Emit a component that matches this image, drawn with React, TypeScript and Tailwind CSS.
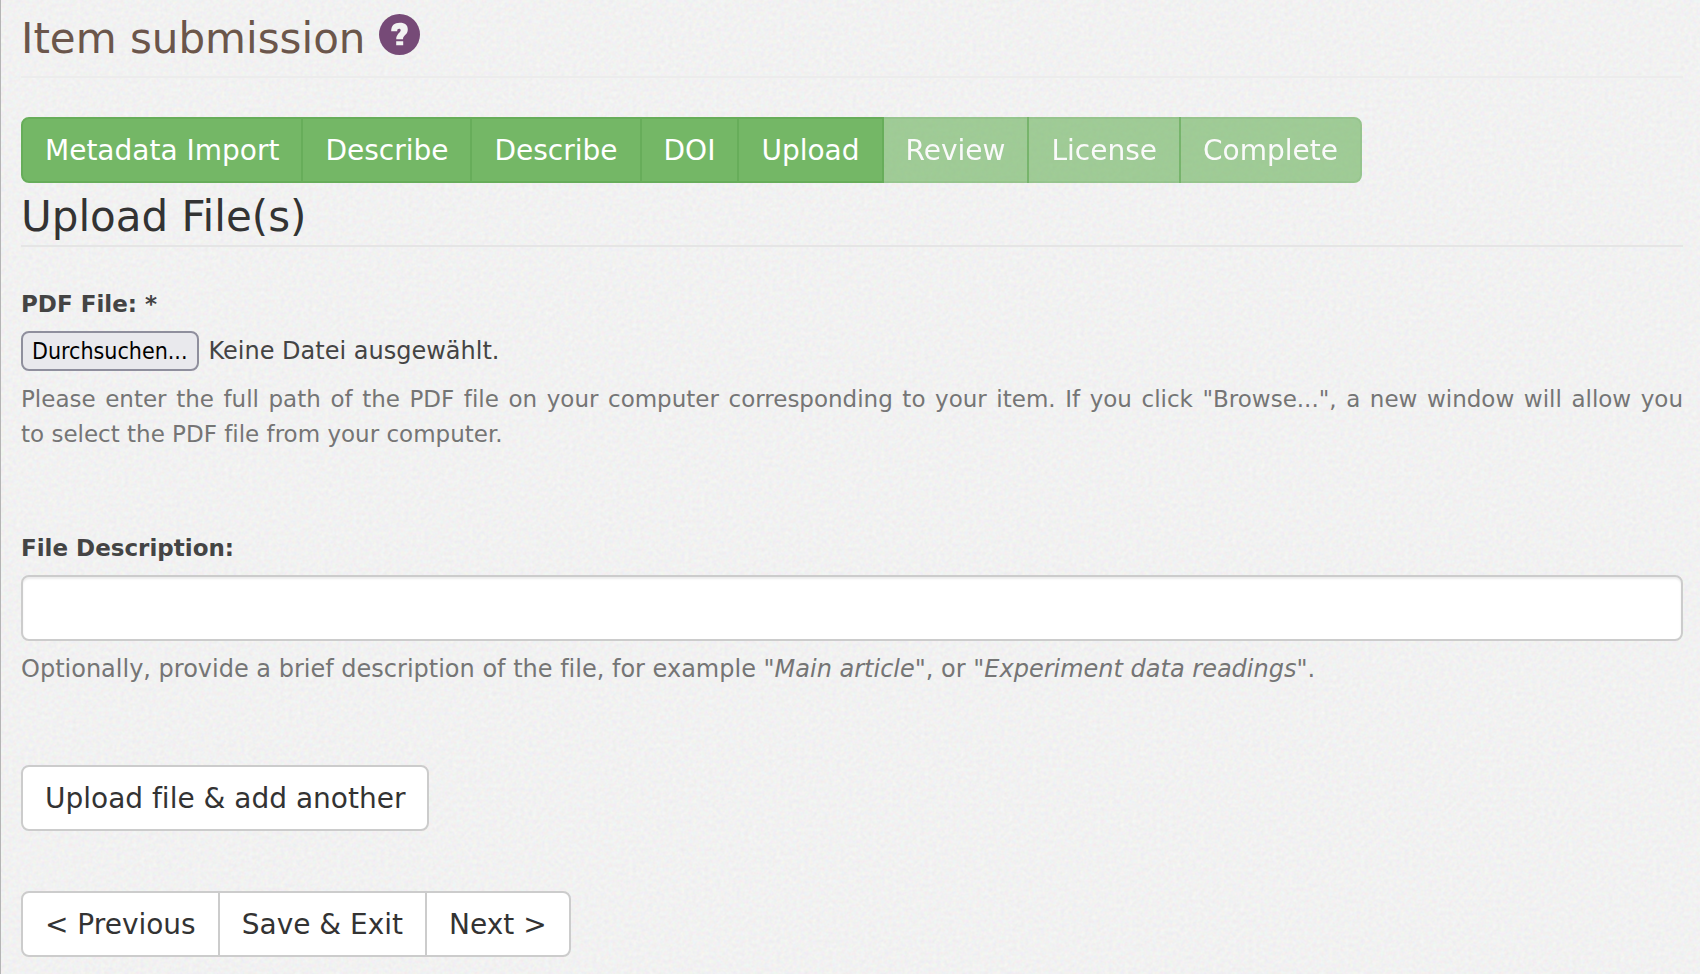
import { useRef, useState } from "react";

const steps = [
  { label: "Metadata Import", done: true },
  { label: "Describe", done: true },
  { label: "Describe", done: true },
  { label: "DOI", done: true },
  { label: "Upload", done: true },
  { label: "Review", done: false },
  { label: "License", done: false },
  { label: "Complete", done: false },
];

function PaperTexture() {
  return (
    <svg aria-hidden="true" className="pointer-events-none absolute inset-0 -z-10 h-full w-full">
      <filter id="paper" colorInterpolationFilters="sRGB" x="0" y="0" width="100%" height="100%">
        <feTurbulence type="fractalNoise" baseFrequency="0.25" numOctaves="2" />
        <feColorMatrix
          type="matrix"
          values="0.07 0 0 0 0.911  0 0.07 0 0 0.911  0 0 0.07 0 0.911  0 0 0 0 1"
        />
      </filter>
      <rect width="100%" height="100%" filter="url(#paper)" />
    </svg>
  );
}

function HelpIcon() {
  return (
    <svg viewBox="0 0 41 41" className="size-[41px]" aria-hidden="true">
      <circle cx="20.5" cy="20.5" r="20.5" fill="#764a77" />
      <path
        fill="#f2f2f2"
        d="M12.2 17.2C12.2 11.6 15.2 8.8 20.8 8.8C26.2 8.8 28.8 11.3 28.8 15.4C28.8 21 24 20.8 24 25.2H17.2C17.2 20 21.7 18.6 21.7 16.3C21.7 15.3 21 14.8 20.1 14.8C18.8 14.8 18.2 15.6 18.2 17.2ZM17.2 27.2H24.2V31.3H17.2Z"
      />
    </svg>
  );
}

const groupButton =
  "h-[66px] cursor-pointer border-2 border-[#cccccc] bg-white px-[22px] text-[28px] text-[#333333] not-first:-ml-[2px] first:rounded-l-lg last:rounded-r-lg hover:bg-gray-100";

export default function App() {
  const fileRef = useRef<HTMLInputElement>(null);
  const [fileName, setFileName] = useState("Keine Datei ausgewählt.");

  return (
    <main className="relative isolate min-h-screen border-l border-[#b5b5b5] bg-[#f2f2f2] pr-[17px] pl-5 font-['DejaVu_Sans',Verdana,sans-serif] text-[23px] leading-[35px] text-[#444444] [font-variant-ligatures:none]">
      <PaperTexture />
      <header className="flex gap-[14px] border-b-2 border-[#ececec] pt-[14px] pb-3">
        <h1 className="text-[42px] leading-[50px] text-[#6b564b]">Item submission</h1>
        <a href="#help" aria-label="Help" className="h-[41px]">
          <HelpIcon />
        </a>
      </header>

      <nav aria-label="Submission steps" className="mt-[39px] flex">
        {steps.map((step, i) => (
          <button
            key={i}
            type="button"
            disabled={!step.done}
            className="h-[66px] border-2 border-[#67ad5a] bg-[#74b766] px-[22px] text-[28px] text-white not-first:-ml-[2px] first:rounded-l-lg last:rounded-r-lg disabled:opacity-65"
          >
            {step.label}
          </button>
        ))}
      </nav>

      <form onSubmit={(e) => e.preventDefault()}>
        <h2 className="border-b-2 border-[#e5e5e5] pt-[9px] pb-[3px] text-[42px] leading-[50px] text-[#333333]">
          Upload File(s)
        </h2>

        <label htmlFor="pdf" className="mt-[40px] block font-bold">
          PDF File: *
        </label>
        <div className="mt-[9px] flex items-center gap-[10px]">
          <input
            id="pdf"
            ref={fileRef}
            type="file"
            accept="application/pdf"
            className="sr-only"
            onChange={(e) => setFileName(e.target.files?.[0]?.name ?? "Keine Datei ausgewählt.")}
          />
          <button
            type="button"
            onClick={() => fileRef.current?.click()}
            className="h-10 rounded-lg border-2 border-[#8f8f9d] bg-[#e9e9ed] px-[9px] font-['DejaVu_Sans_Condensed','DejaVu_Sans',sans-serif] text-black"
          >
            Durchsuchen...
          </button>
          <span className="text-[24px]">{fileName}</span>
        </div>
        <p className="mt-[11px] text-justify text-[#757575]">
          Please enter the full path of the PDF file on your computer corresponding to your item. If you click
          "Browse...", a new window will allow you to&nbsp;select the PDF file from your computer.
        </p>

        <label htmlFor="description" className="mt-[79px] block font-bold">
          File Description:
        </label>
        <input
          id="description"
          type="text"
          className="mt-[9px] block h-[66px] w-full rounded-lg border-2 border-[#cccccc] bg-white px-[21px] text-[28px] shadow-[inset_0_2px_2px_rgba(0,0,0,0.075)]"
        />
        <p className="mt-[11px] text-[24px] text-[#757575]">
          Optionally, provide a brief description of the file, for example "<i>Main article</i>", or "
          <i>Experiment data readings</i>".
        </p>

        <div className="mt-[78px] flex">
          <button type="submit" className={groupButton}>
            Upload file &amp; add another
          </button>
        </div>
        <div className="mt-[60px] flex pb-[14px]">
          <button type="button" className={groupButton}>
            &lt; Previous
          </button>
          <button type="button" className={groupButton}>
            Save &amp; Exit
          </button>
          <button type="button" className={groupButton}>
            Next &gt;
          </button>
        </div>
      </form>
    </main>
  );
}
